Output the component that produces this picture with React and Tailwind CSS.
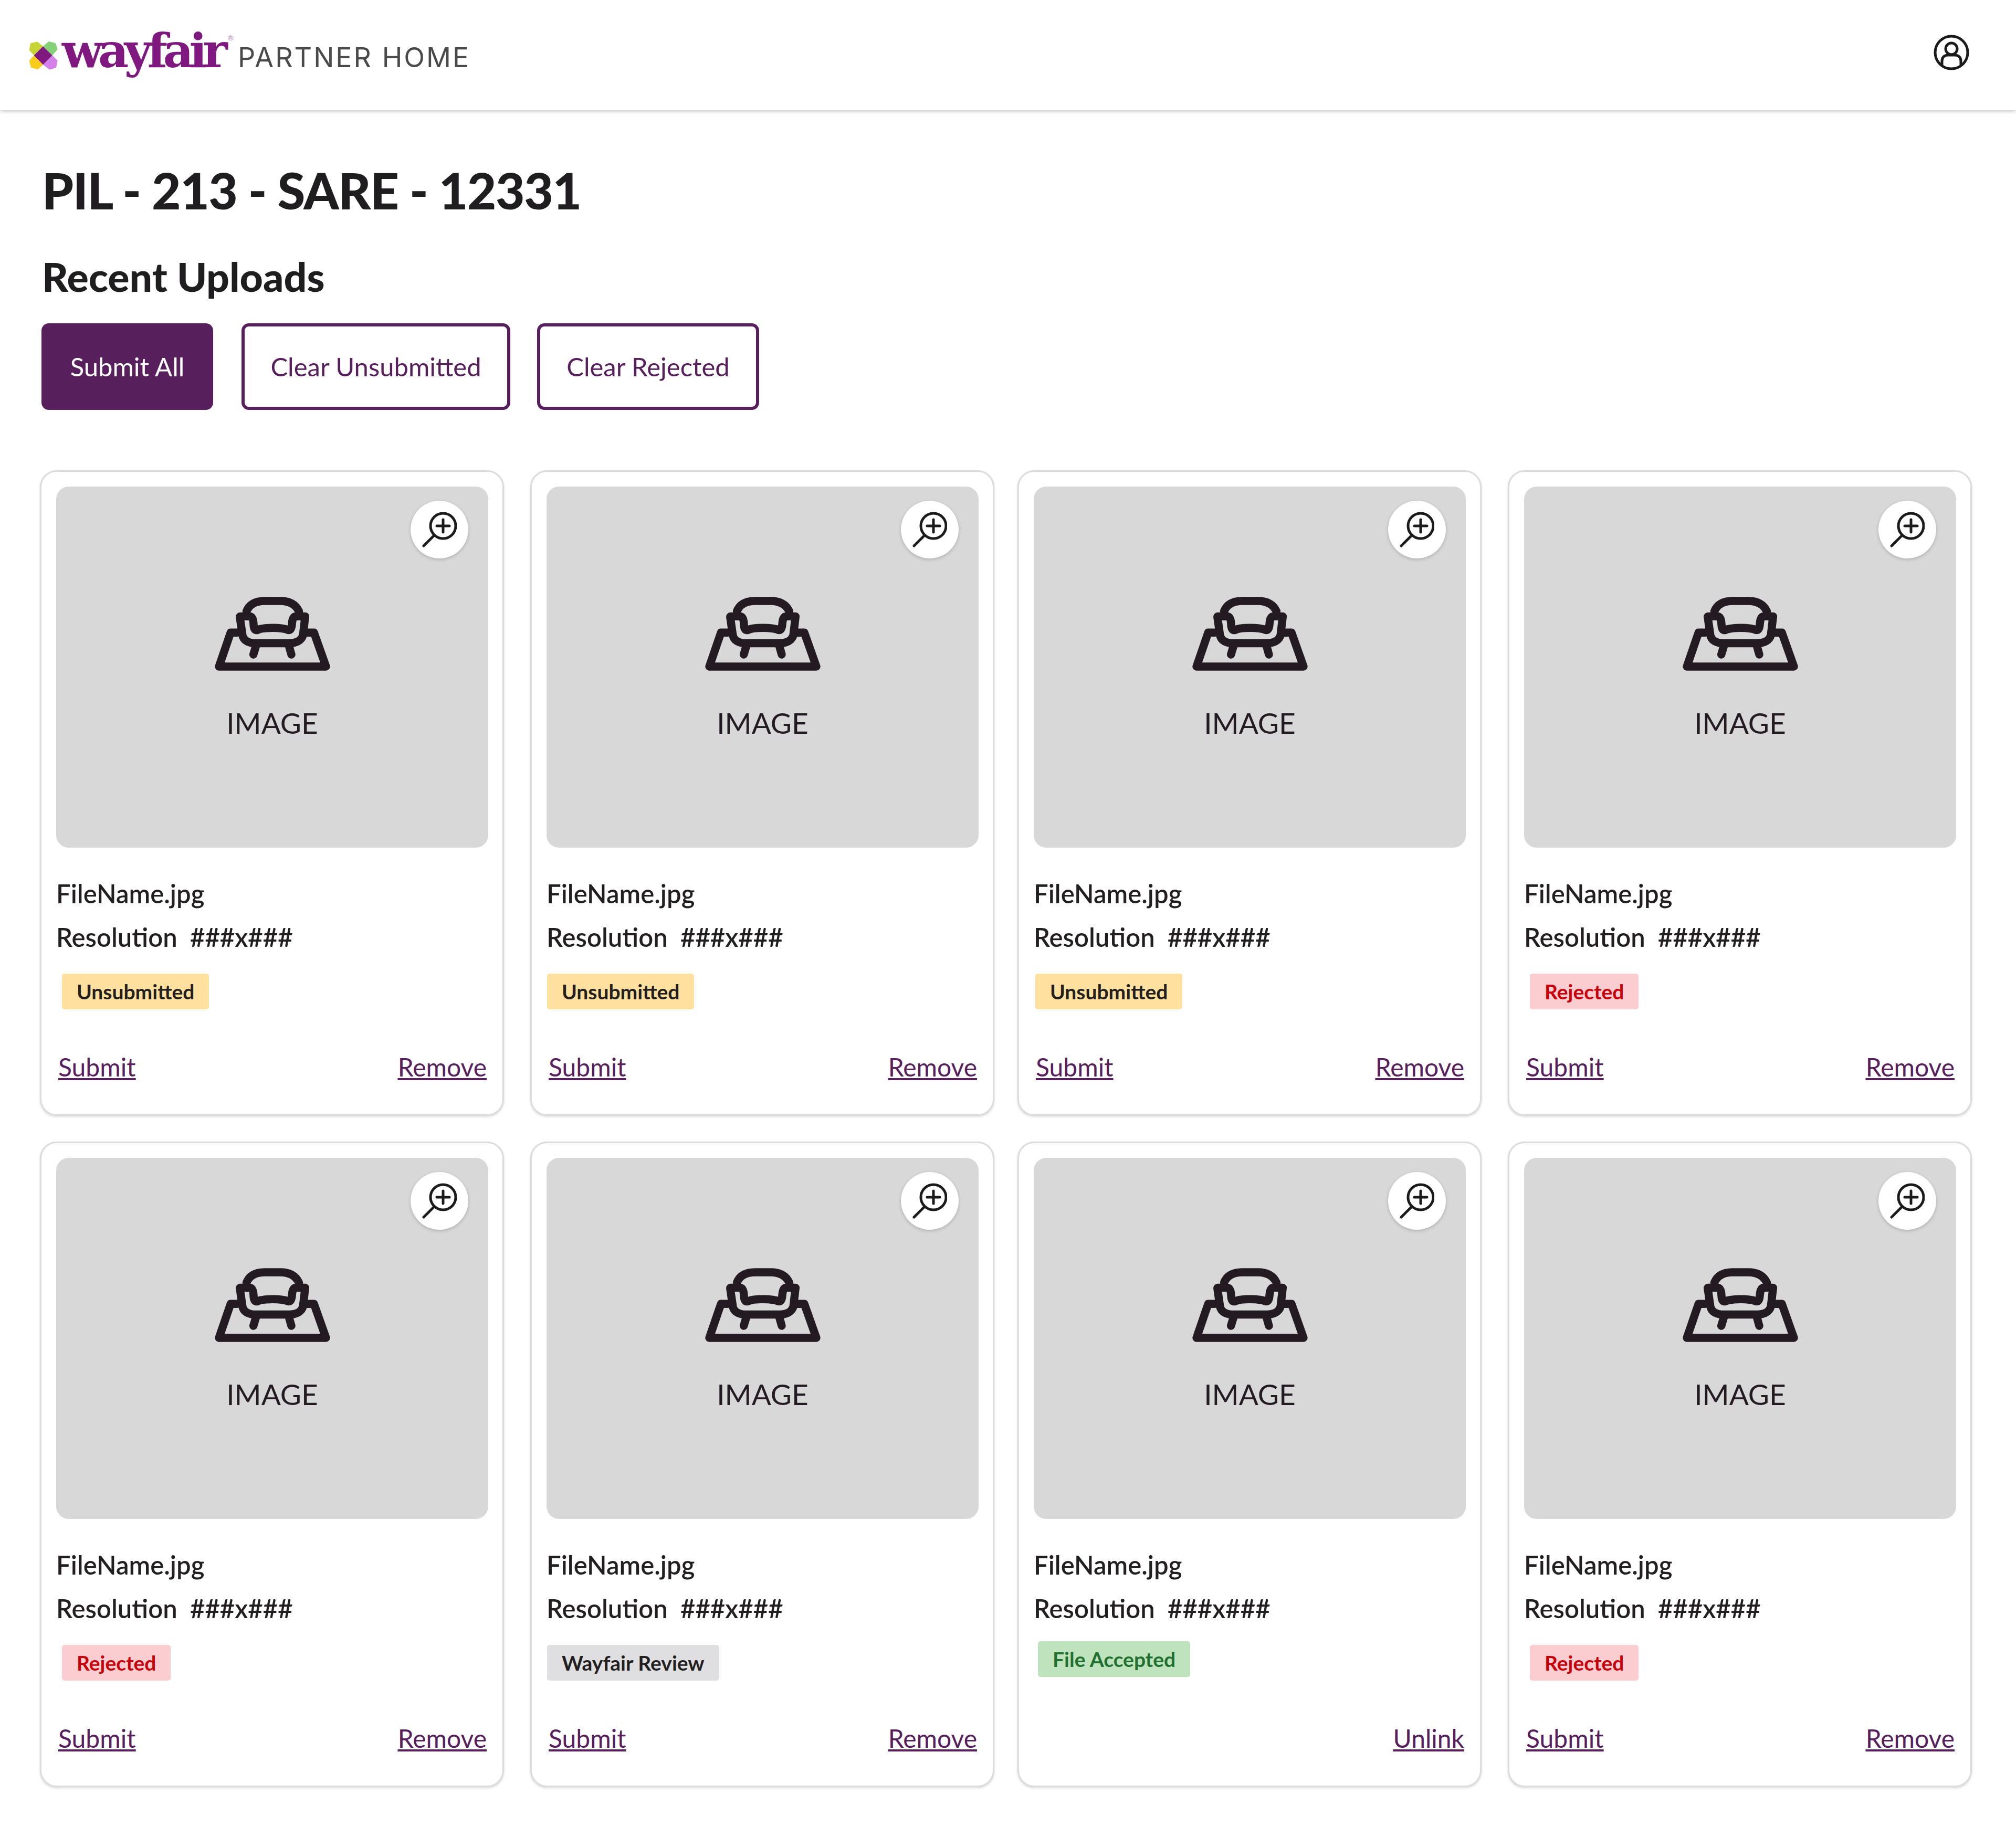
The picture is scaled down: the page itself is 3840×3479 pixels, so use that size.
import React from 'react';

const cards = [
  { badge: 'Unsubmitted', badgeClass: 'ml-[11px] bg-[#ffe09e] text-[#231f20]' },
  { badge: 'Unsubmitted', cardClass: 'ml-[2px] -mr-[2px]', badgeClass: 'ml-[1px] bg-[#ffe09e] text-[#231f20]' },
  { badge: 'Unsubmitted', cardClass: '-ml-[2px] mr-[2px]', badgeClass: 'ml-[3px] bg-[#ffe09e] text-[#231f20]' },
  { badge: 'Rejected', badgeClass: 'ml-[11px] bg-[#fbcdd0] text-[#c8000a]' },
  { badge: 'Rejected', badgeClass: 'ml-[11px] bg-[#fbcdd0] text-[#c8000a]' },
  { badge: 'Wayfair Review', cardClass: 'ml-[2px] -mr-[2px]', badgeClass: 'ml-[1px] bg-[#dfdfe2] text-[#231f20]' },
  { badge: 'File Accepted', cardClass: '-ml-[2px] mr-[2px]', badgeClass: 'ml-[8px] -translate-y-[7px] bg-[#bfe3bd] text-[#22702f]', unlink: true },
  { badge: 'Rejected', badgeClass: 'ml-[11px] bg-[#fbcdd0] text-[#c8000a]' },
];

function LogoMark() {
  return (
    <svg width="60" height="57" viewBox="70 110 180 170" className="shrink-0">
      <polygon points="105,195 78,165 85,125 125,117 157,143" fill="#c7d636" />
      <polygon points="157,143 190,115 228,125 240,160 210,195" fill="#84d176" />
      <polygon points="105,195 78,225 88,265 128,275 157,248" fill="#f9cc1b" />
      <polygon points="210,195 240,225 232,265 195,277 157,248" fill="#d47fea" />
      <polygon points="157,143 210,195 157,248 105,195" fill="#7f187f" />
    </svg>
  );
}

function UserIcon() {
  return (
    <svg width="72" height="72" viewBox="0 0 72 72" fill="none" stroke="#1c1a1b" strokeWidth="5" className="mb-[10px]">
      <circle cx="36" cy="36" r="31" />
      <circle cx="36" cy="29" r="11" />
      <path d="M18 60V52C18 45 23 41 29 41H43C49 41 54 45 54 52V60" />
    </svg>
  );
}

function ZoomIcon() {
  return (
    <svg width="66" height="68" viewBox="0 0 66 68" fill="none" stroke="#1c1a1b" strokeWidth="5" strokeLinecap="round">
      <circle cx="40" cy="27" r="24" />
      <path d="M40 15V39M28 27H52" />
      <path d="M23 45L3 65" />
    </svg>
  );
}

function ChairIcon() {
  return (
    <svg width="222" height="143" viewBox="85 140 660 425" fill="none" stroke="#231a22" strokeWidth="46" strokeLinecap="round" strokeLinejoin="round">
      <path d="M215 346H178L112 538H718L650 346H610" />
      <path d="M268 225C285 185 320 167 370 167H460C510 167 545 185 565 225" />
      <path d="M232 254H285C303 254 307 275 308 300C309 322 315 332 328 332C360 315 470 315 505 332C518 332 523 322 525 300C527 275 531 254 548 254H600" />
      <path d="M230 256L245 360C250 390 280 406 320 406H510C550 406 580 390 588 360L600 256" />
      <path d="M322 420L307 470M508 420L522 470" />
    </svg>
  );
}

function UploadCard({ badge, badgeClass, cardClass, unlink }) {
  return (
    <div className={`flex h-[1230px] flex-col rounded-[32px] border-[3px] border-[#dcdcdc] bg-white pt-[28px] pr-[27px] pl-[28px] shadow-[0_2px_4px_rgba(0,0,0,0.15)] ${cardClass || ''}`}>
      <div className="relative flex h-[688px] flex-col items-center rounded-[24px] bg-[#d8d8d8] pt-[209px]">
        <button className="absolute top-[27px] right-[38px] flex h-[110px] w-[110px] items-center justify-center rounded-full bg-white shadow-[0_2px_6px_rgba(0,0,0,0.2)]">
          <ZoomIcon />
        </button>
        <ChairIcon />
        <div className="mt-[66px] text-[55px] leading-[65px] text-[#231a22]">IMAGE</div>
      </div>
      <div className="mt-[46px] text-[49px] leading-[83px] font-semibold text-[#231f20]">
        <div>FileName.jpg</div>
        <div className="whitespace-pre">Resolution  ###x###</div>
      </div>
      <div className={`mt-[28px] inline-flex h-[68px] items-center self-start rounded-[5px] px-[28px] text-[39px] font-bold ${badgeClass}`}>
        {badge}
      </div>
      <div className={`mt-[80px] flex pr-[3px] pl-[4px] text-[48px] leading-[60px] text-[#57205c] underline ${unlink ? 'justify-end' : 'justify-between'}`}>
        {unlink ? <a>Unlink</a> : <><a>Submit</a><a>Remove</a></>}
      </div>
    </div>
  );
}

export default function App() {
  return (
    <div className="min-h-[3479px] bg-white font-['Lato',sans-serif] text-[#231f20]">
      <header className="flex h-[210px] items-center justify-between pr-[87px] pl-[53px] shadow-[0_3px_6px_rgba(0,0,0,0.18)]">
        <div className="flex items-center">
          <LogoMark />
          <div className="ml-[5px] flex items-baseline pb-[18px]">
            <span className="font-['DejaVu_Serif',serif] text-[90px] leading-[110px] font-bold tracking-[-8.5px] text-[#7f187f]">wayfair</span>
            <span className="ml-[8px] self-start pt-[20px] text-[14px] text-[#b58ab5]">®</span>
            <span className="ml-[8px] font-['Inter',sans-serif] text-[52px] tracking-[3px] text-[#4a4a4a]">PARTNER HOME</span>
          </div>
        </div>
        <UserIcon />
      </header>
      <main className="pt-[94px] pb-[72px] pl-[76px]">
        <h1 className="ml-[4px] text-[96px] leading-[115px] font-black tracking-[-1.5px] text-[#1f1d20]">PIL - 213 - SARE - 12331</h1>
        <h2 className="mt-[64px] ml-[4px] text-[77px] leading-[86px] font-black text-[#1f1d20]">Recent Uploads</h2>
        <div className="mt-[47px] ml-[3px] flex">
          <button className="h-[165px] w-[327px] rounded-[14px] bg-[#57205c] text-[49px] text-white">Submit All</button>
          <button className="ml-[54px] h-[165px] w-[512px] rounded-[14px] border-[6px] border-[#57205c] text-[49px] text-[#57205c]">Clear Unsubmitted</button>
          <button className="ml-[51px] h-[165px] w-[423px] rounded-[14px] border-[6px] border-[#57205c] text-[49px] text-[#57205c]">Clear Rejected</button>
        </div>
        <div className="mt-[115px] grid w-[3680px] grid-cols-4 gap-x-[48px] gap-y-[49px]">
          {cards.map((card, index) => (
            <UploadCard key={index} {...card} />
          ))}
        </div>
      </main>
    </div>
  );
}
